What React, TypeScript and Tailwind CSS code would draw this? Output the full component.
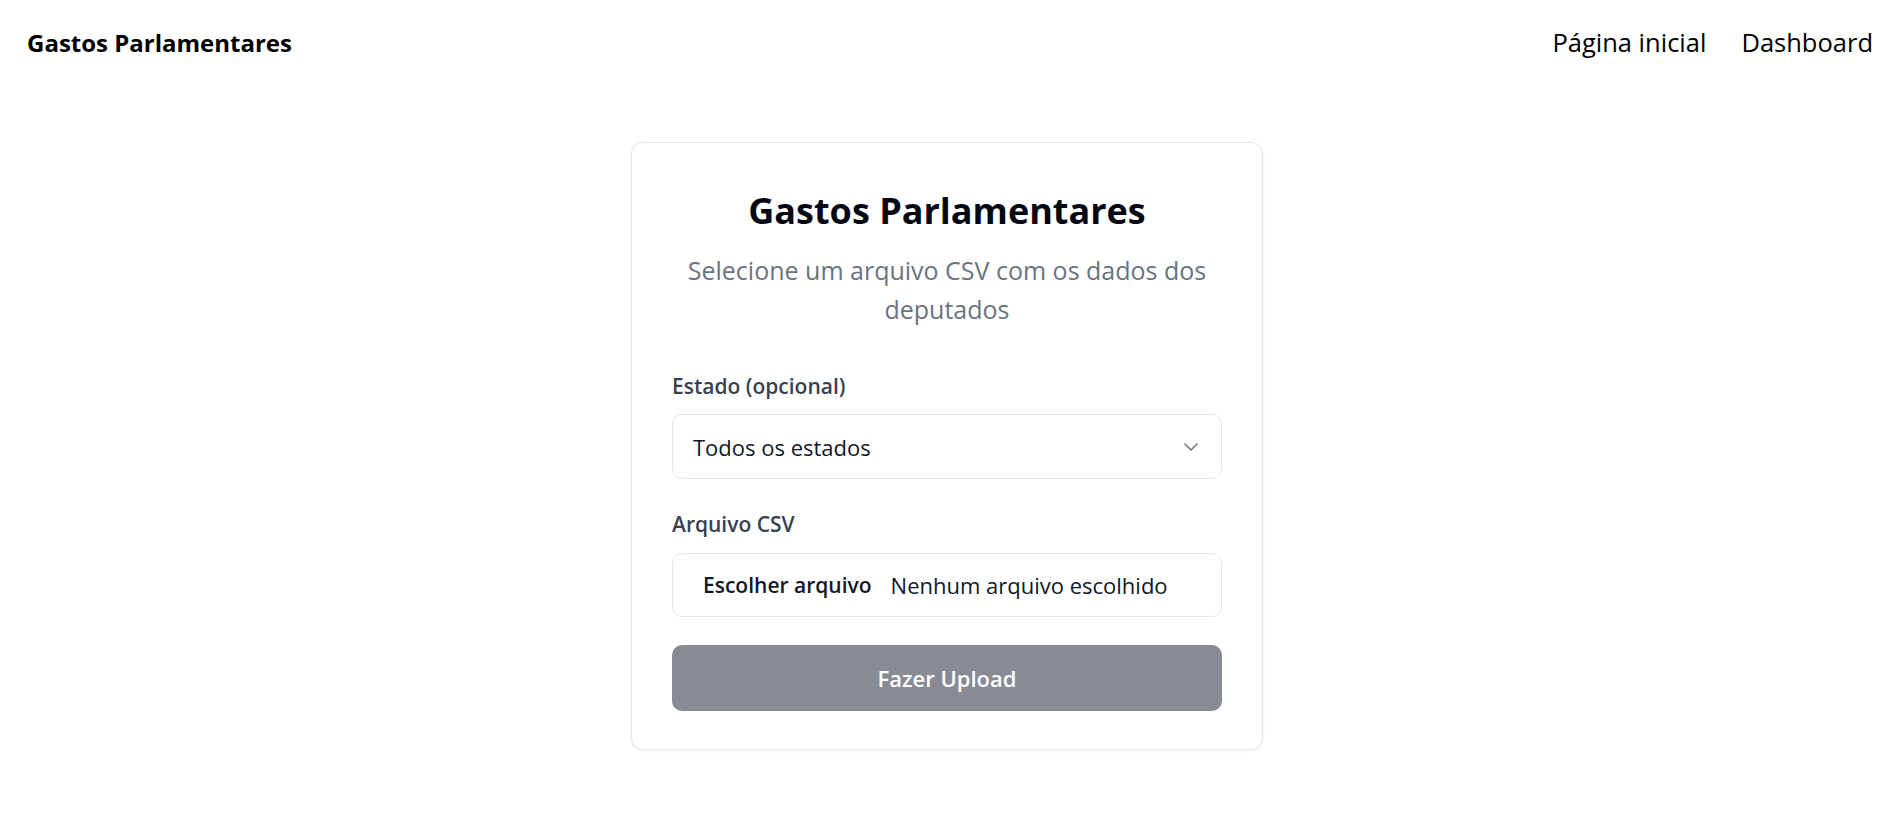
import React from "react";

export default function App() {
  return (
    <div className="min-h-[831px] w-full bg-white font-['Open_Sans',sans-serif] text-black">
      <header className="flex h-[86px] items-center justify-between pl-[27px] pr-[15px]">
        <div className="text-[24px] font-bold leading-none">Gastos Parlamentares</div>
        <nav className="flex items-center gap-[35px] text-[25.5px] leading-none">
          <a href="#">Página inicial</a>
          <a href="#">Dashboard</a>
        </nav>
      </header>
      <main className="flex justify-center pl-[6px] pt-[56px]">
        <div className="w-[632px] rounded-[12px] border border-[#e5e7eb] bg-white px-10 pt-[46px] pb-[38px] shadow-[0_1px_3px_rgba(0,0,0,0.06)]">
          <h1 className="text-center text-[36px] font-bold leading-[44px] text-[#030712]">
            Gastos Parlamentares
          </h1>
          <p className="mt-[18px] text-center text-[25px] leading-[38.5px] text-[#6b7280]">
            Selecione um arquivo CSV com os dados dos deputados
          </p>
          <label className="mt-[44px] block text-[21px] font-semibold leading-[28px] text-[#374151]">
            Estado (opcional)
          </label>
          <div className="mt-[14px] flex h-[65px] items-center justify-between rounded-[10px] border border-[#e5e7eb] pl-[20px] pr-[23px]">
            <span className="whitespace-nowrap text-[22px] leading-none text-[#111827]">Todos os estados</span>
            <svg width="14" height="8" viewBox="0 0 14 8" fill="none">
              <polyline points="1,1 7,7 13,1" stroke="#6b7280" strokeWidth="1.5" strokeLinecap="round" strokeLinejoin="round" />
            </svg>
          </div>
          <label className="mt-[31px] block text-[21px] font-semibold leading-[28px] text-[#374151]">
            Arquivo CSV
          </label>
          <div className="mt-[15px] flex h-[64px] items-center whitespace-nowrap rounded-[10px] border border-[#e5e7eb] pl-[30px]">
            <span className="text-[21px] font-semibold leading-none text-[#111827]">Escolher arquivo</span>
            <span className="ml-[19px] text-[22px] leading-none text-[#111827]">Nenhum arquivo escolhido</span>
          </div>
          <button className="mt-[28px] flex h-[66px] w-full items-center justify-center rounded-[10px] bg-[#888b94] text-[22px] font-semibold leading-none text-white">
            Fazer Upload
          </button>
        </div>
      </main>
    </div>
  );
}
